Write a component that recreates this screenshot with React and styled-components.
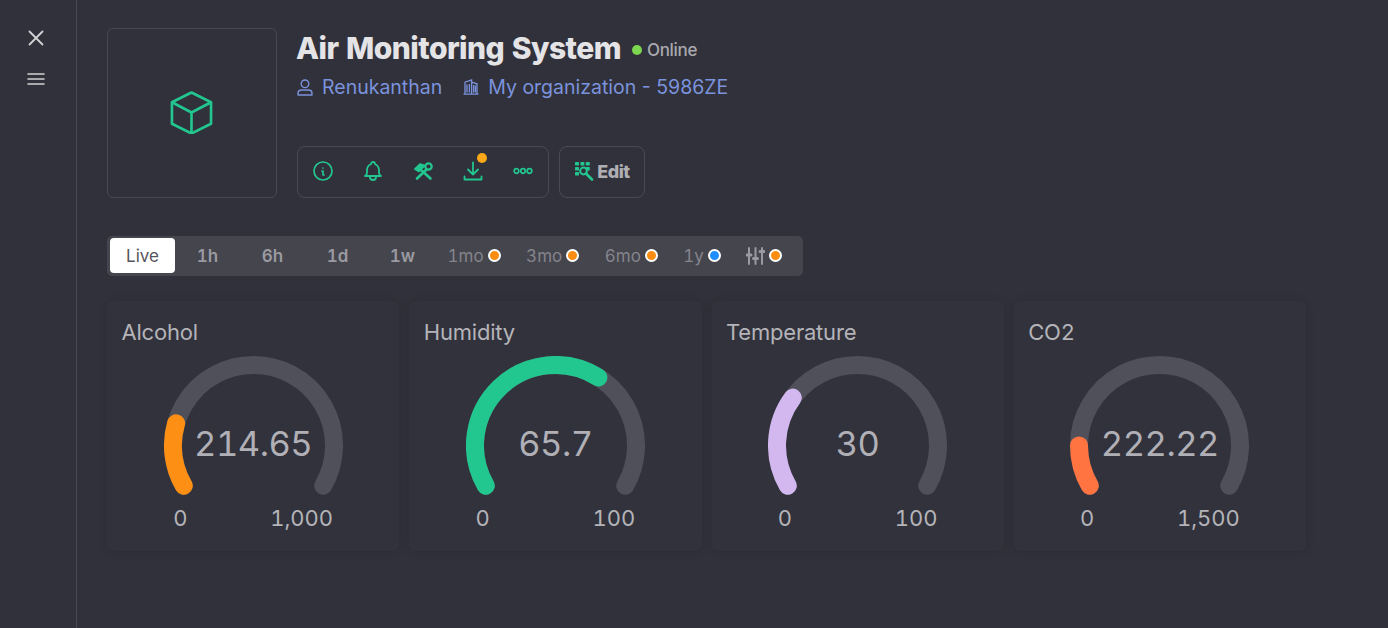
import React from "react";
import styled, { createGlobalStyle } from "styled-components";
import { TbInfoCircle, TbBell } from "react-icons/tb";

const GlobalStyle = createGlobalStyle`
  html, body {
    margin: 0;
    padding: 0;
    background: #31313b;
    font-family: "Inter", "Liberation Sans", sans-serif;
    font-variant-numeric: tabular-nums;
  }
`;

const periods = [
  { label: "1h", strong: true },
  { label: "6h", strong: true },
  { label: "1d", strong: true },
  { label: "1w", strong: true },
  { label: "1mo", dot: "#fb8c12" },
  { label: "3mo", dot: "#fb8c12" },
  { label: "6mo", dot: "#fb8c12" },
  { label: "1y", dot: "#1f8fff" },
];

const gauges = [
  { name: "Alcohol", value: 214.65, max: 1000, maxLabel: "1,000", color: "#fd9014" },
  { name: "Humidity", value: 65.7, max: 100, maxLabel: "100", color: "#22c68f" },
  { name: "Temperature", value: 30, max: 100, maxLabel: "100", color: "#d3b8f0" },
  { name: "CO2", value: 222.22, max: 1500, maxLabel: "1,500", color: "#ff7440" },
];

function polar(deg) {
  const r = 80.5;
  const a = (deg * Math.PI) / 180;
  return [89.5 + r * Math.cos(a), 89.5 - r * Math.sin(a)];
}

// arc from the lower left end, going clockwise by "sweep" degrees
function arcPath(sweep) {
  const [x1, y1] = polar(210);
  const [x2, y2] = polar(210 - sweep);
  return `M${x1} ${y1}A80.5 80.5 0 ${sweep > 180 ? 1 : 0} 1 ${x2} ${y2}`;
}

function Gauge({ name, value, max, maxLabel, color }) {
  return (
    <Card>
      <CardTitle>{name}</CardTitle>
      <Dial>
        <svg width="179" height="140" viewBox="0 0 179 140" fill="none" strokeWidth="18" strokeLinecap="round">
          <path d={arcPath(240)} stroke="#50505a" />
          <path d={arcPath((value / max) * 240 - 5.5)} stroke={color} />
        </svg>
        <DialValue>{value}</DialValue>
      </Dial>
      <Limits>
        <span>0</span>
        <span>{maxLabel}</span>
      </Limits>
    </Card>
  );
}

function CubeIcon() {
  return (
    <svg width="43" height="43" viewBox="0 0 44 44" fill="none" stroke="#22c68f" strokeWidth="2.7" strokeLinejoin="round">
      <path d="M22 1.5l20 10v22l-20 10l-20-10v-22z" />
      <path d="M22 22l20-10.5M22 22v21.5M22 22l-20-10.5" />
    </svg>
  );
}

function UserIcon() {
  return (
    <svg width="16" height="17" viewBox="0 0 16 17" fill="none" stroke="#7b93dc" strokeWidth="1.4" strokeLinejoin="round">
      <circle cx="8" cy="4.8" r="3.8" />
      <path d="M1 16v-1.6c0-2 1.6-3.4 3.6-3.4h6.8c2 0 3.6 1.4 3.6 3.4V16z" />
    </svg>
  );
}

function BuildingIcon() {
  return (
    <svg width="16" height="16" viewBox="0 0 16 16" fill="none" stroke="#7b93dc" strokeWidth="1.3">
      <path d="M.5 15.2h15M2 15V3.2L8.6 1v14M8.6 3.2L14 4.8V15" />
      <path d="M4 5.5v8M6.4 5v8.5M10.6 6v7.5M12.4 6.5v7" />
    </svg>
  );
}

function ToolsIcon() {
  return (
    <svg width="21" height="20" viewBox="0 0 21 20" fill="none" stroke="#22c68f" strokeWidth="2.6" strokeLinecap="round" strokeLinejoin="round">
      <path d="M8 9l9.5 8.5" />
      <path d="M1.8 8L7 3l5 1.5L6 10.5z" fill="#22c68f" strokeWidth="1.6" />
      <path d="M13.5 8.5L4 17.5" />
      <circle cx="15.5" cy="5.5" r="3.2" strokeWidth="2.2" />
    </svg>
  );
}

function DownloadIcon() {
  return (
    <svg width="20" height="20" viewBox="0 0 20 20" fill="none" stroke="#22c68f" strokeWidth="1.8" strokeLinecap="round" strokeLinejoin="round">
      <path d="M10 1.5v12M5 8.5l5 5l5-5" />
      <path d="M1.5 15.5v3h17v-3" />
    </svg>
  );
}

function DotsIcon() {
  return (
    <svg width="20" height="8" viewBox="0 0 20 8" fill="none" stroke="#22c68f" strokeWidth="1.7">
      <circle cx="3.5" cy="4" r="2.3" />
      <circle cx="10" cy="4" r="2.3" />
      <circle cx="16.5" cy="4" r="2.3" />
    </svg>
  );
}

function EditIcon() {
  return (
    <svg width="20" height="20" viewBox="0 0 20 20" fill="#22c68f" stroke="#22c68f">
      <g stroke="none">
        <rect x="1" y="1" width="4" height="3.4" rx="0.7" />
        <rect x="6.4" y="1" width="4" height="3.4" rx="0.7" />
        <rect x="11.8" y="1" width="4" height="3.4" rx="0.7" />
        <rect x="1" y="6" width="4" height="3.4" rx="0.7" />
        <rect x="11.8" y="6" width="4" height="3.4" rx="0.7" />
        <rect x="1" y="11" width="4" height="3.4" rx="0.7" />
      </g>
      <circle cx="9.5" cy="10" r="3.4" fill="none" strokeWidth="2" />
      <path d="M12 12.5l6 6" fill="none" strokeWidth="2.6" strokeLinecap="round" />
    </svg>
  );
}

function SlidersIcon() {
  return (
    <svg width="19" height="20" viewBox="0 0 19 20" fill="none" stroke="#9a9aa0" strokeWidth="2" strokeLinecap="round">
      <path d="M3 2v16M9.5 2v16M16 2v16" />
      <path d="M1 9h4M7.5 12.5h4M14 5.5h4" strokeWidth="3" />
    </svg>
  );
}

export default function App() {
  return (
    <Page>
      <GlobalStyle />
      <Sidebar>
        <svg width="18" height="18" viewBox="0 0 18 18" stroke="#d2d2d4" strokeWidth="1.8" strokeLinecap="round">
          <path d="M2.5 2.5l13 13M15.5 2.5l-13 13" />
        </svg>
        <svg width="20" height="14" viewBox="0 0 20 14" stroke="#d2d2d4" strokeWidth="1.6" strokeLinecap="round">
          <path d="M2 2h16M2 7h16M2 12h16" />
        </svg>
      </Sidebar>
      <Main>
        <Header>
          <Thumb>
            <CubeIcon />
          </Thumb>
          <Info>
            <div>
              <TitleRow>
                <Title>Air Monitoring System</Title>
                <StatusDot />
                <Status>Online</Status>
              </TitleRow>
              <Meta>
                <MetaItem>
                  <UserIcon />
                  Renukanthan
                </MetaItem>
                <MetaItem>
                  <BuildingIcon />
                  My organization - 5986ZE
                </MetaItem>
              </Meta>
            </div>
            <Actions>
              <Toolbar>
                <ToolButton>
                  <TbInfoCircle size={24} strokeWidth={1.7} />
                </ToolButton>
                <ToolButton>
                  <TbBell size={24} strokeWidth={1.8} />
                </ToolButton>
                <ToolButton>
                  <ToolsIcon />
                </ToolButton>
                <ToolButton>
                  <DownloadIcon />
                  <Badge />
                </ToolButton>
                <ToolButton>
                  <DotsIcon />
                </ToolButton>
              </Toolbar>
              <EditButton>
                <EditIcon />
                Edit
              </EditButton>
            </Actions>
          </Info>
        </Header>

        <PeriodBar>
          <LiveTab>Live</LiveTab>
          {periods.map((p) =>
            p.strong ? (
              <PeriodTab key={p.label}>{p.label}</PeriodTab>
            ) : (
              <LockedTab key={p.label}>
                {p.label}
                <PlanDot $color={p.dot} />
              </LockedTab>
            )
          )}
          <LockedTab>
            <SlidersIcon />
            <PlanDot $color="#fb8c12" />
          </LockedTab>
        </PeriodBar>

        <Cards>
          {gauges.map((g) => (
            <Gauge key={g.name} {...g} />
          ))}
        </Cards>
      </Main>
    </Page>
  );
}

const Page = styled.div`
  display: flex;
  min-height: 628px;
  background: #31313b;
`;

const Sidebar = styled.aside`
  box-sizing: border-box;
  width: 77px;
  flex: none;
  display: flex;
  flex-direction: column;
  align-items: center;
  gap: 25px;
  padding: 29px 5px 0 0;
  border-right: 1px solid #4a4a54;
`;

const Main = styled.main`
  flex: 1;
  padding: 28px 82px 0 30px;
`;

const Header = styled.header`
  display: flex;
  gap: 20px;
`;

const Thumb = styled.div`
  box-sizing: border-box;
  width: 170px;
  height: 170px;
  padding: 0 1px 2px 0;
  display: flex;
  align-items: center;
  justify-content: center;
  border: 1px solid #484852;
  border-radius: 6px;
`;

const Info = styled.div`
  display: flex;
  flex-direction: column;
  justify-content: space-between;
  height: 170px;
`;

const TitleRow = styled.div`
  display: flex;
  align-items: center;
  height: 40px;
`;

const Title = styled.h1`
  margin: 0 0 0 -1px;
  font-size: 30px;
  font-weight: 800;
  letter-spacing: -0.55px;
  color: #e4e4e6;
`;

const StatusDot = styled.span`
  width: 10px;
  height: 10px;
  margin: 4px 5px 0 11px;
  border-radius: 50%;
  background: #7bd650;
`;

const Status = styled.span`
  margin-top: 4px;
  font-size: 17px;
  font-weight: 500;
  letter-spacing: -0.3px;
  color: #a9a9ae;
`;

const Meta = styled.div`
  display: flex;
  gap: 21px;
  margin-top: 7px;
`;

const MetaItem = styled.span`
  display: flex;
  align-items: center;
  gap: 9px;
  font-size: 19.5px;
  font-variant-numeric: normal;
  color: #7b93dc;
`;

const Actions = styled.div`
  display: flex;
  gap: 10px;
`;

const Toolbar = styled.div`
  box-sizing: border-box;
  height: 52px;
  display: flex;
  padding-bottom: 2px;
  border: 1px solid #4a4a54;
  border-radius: 8px;
`;

const ToolButton = styled.div`
  position: relative;
  width: 50px;
  display: flex;
  align-items: center;
  justify-content: center;
  color: #22c68f;
`;

const Badge = styled.span`
  position: absolute;
  top: 6px;
  right: 11px;
  width: 10px;
  height: 10px;
  border-radius: 50%;
  background: #fca819;
`;

const EditButton = styled.div`
  box-sizing: border-box;
  height: 52px;
  width: 86px;
  padding-bottom: 2px;
  display: flex;
  align-items: center;
  justify-content: center;
  gap: 3px;
  border: 1px solid #4a4a54;
  border-radius: 8px;
  font-size: 18px;
  font-weight: 800;
  letter-spacing: -0.5px;
  color: #aeaeb3;
`;

const PeriodBar = styled.nav`
  box-sizing: border-box;
  width: 696px;
  height: 40px;
  margin-top: 38px;
  display: flex;
  align-items: flex-start;
  padding: 2px 3px 0;
  border-radius: 5px;
  background: #45454e;
`;

const PeriodTab = styled.div`
  width: 65px;
  height: 35px;
  display: flex;
  align-items: center;
  justify-content: center;
  font-size: 17px;
  font-weight: 600;
  color: #9a9aa0;
`;

const LiveTab = styled(PeriodTab)`
  border-radius: 4px;
  background: #fff;
  font-weight: 400;
  color: #55555c;
`;

const LockedTab = styled.div`
  height: 35px;
  display: flex;
  align-items: center;
  gap: 4px;
  padding: 0 13px 0 12.5px;
  font-size: 17px;
  color: #84848b;
`;

const PlanDot = styled.span`
  box-sizing: border-box;
  width: 13px;
  height: 13px;
  border: 2px solid #fff;
  border-radius: 50%;
  background: ${(p) => p.$color};
`;

const Cards = styled.section`
  display: grid;
  grid-template-columns: repeat(4, 1fr);
  gap: 10px;
  margin-top: 25px;
`;

const Card = styled.article`
  height: 250px;
  box-sizing: border-box;
  padding: 16px 14.5px 0;
  display: flex;
  flex-direction: column;
  border-radius: 6px;
  background: #32323c;
  box-shadow: 0 0 8px rgba(0, 0, 0, 0.12);
`;

const CardTitle = styled.h2`
  margin: 0;
  height: 39px;
  font-size: 22px;
  line-height: 30px;
  font-weight: 400;
  letter-spacing: -0.2px;
  color: #b4b4b9;
`;

const Dial = styled.div`
  position: relative;
  align-self: center;
  width: 179px;
  height: 140px;
  line-height: 0;
`;

const DialValue = styled.div`
  position: absolute;
  left: 0;
  right: 0;
  top: 88px;
  transform: translateY(-50%);
  text-align: center;
  font-size: 34.5px;
  letter-spacing: -0.5px;
  line-height: 40px;
  color: #b0b0b6;
`;

const Limits = styled.div`
  align-self: center;
  box-sizing: border-box;
  width: 160px;
  margin-top: 9px;
  display: flex;
  justify-content: space-between;
  font-size: 22px;
  line-height: 26px;
  color: #b4b4b9;
`;
